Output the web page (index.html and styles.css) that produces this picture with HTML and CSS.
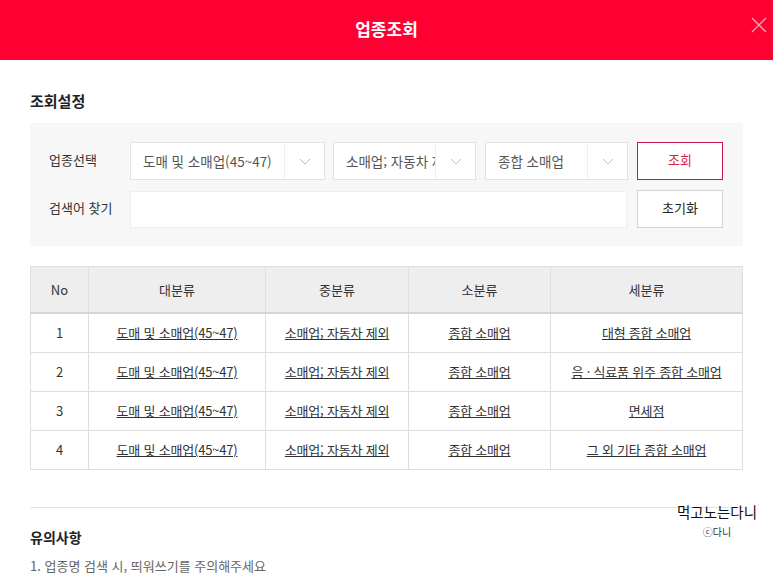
FILE: index.html
```html
<!DOCTYPE html>
<html lang="ko">
<head>
    <meta charset="UTF-8">
    <meta name="viewport" content="width=device-width, initial-scale=1.0">
    <title>업종조회</title>
    <link rel="stylesheet" href="styles.css">
</head>
<body>

    <!-- Header -->
    <header class="popup-header">
        <h1>업종조회</h1>
        <button class="close-btn" aria-label="닫기">
            <svg width="16" height="16" viewBox="0 0 16 16">
                <path d="M1 1L15 15M15 1L1 15" stroke="#ff9fb3" stroke-width="1.3" fill="none"/>
            </svg>
        </button>
    </header>

    <div class="container">

        <!-- Search Settings -->
        <h2 class="section-title">조회설정</h2>
        <div class="search-box">
            <div class="search-row">
                <span class="label">업종선택</span>
                <div class="select wide">
                    <span class="select-text">도매 및 소매업(45~47)</span>
                    <span class="select-arrow"><svg width="12" height="7" viewBox="0 0 12 7"><path d="M1 1L6 6L11 1" stroke="#bbb" fill="none"/></svg></span>
                </div>
                <div class="select">
                    <span class="select-text">소매업; 자동차 제외</span>
                    <span class="select-arrow"><svg width="12" height="7" viewBox="0 0 12 7"><path d="M1 1L6 6L11 1" stroke="#bbb" fill="none"/></svg></span>
                </div>
                <div class="select">
                    <span class="select-text">종합 소매업</span>
                    <span class="select-arrow"><svg width="12" height="7" viewBox="0 0 12 7"><path d="M1 1L6 6L11 1" stroke="#bbb" fill="none"/></svg></span>
                </div>
                <button class="btn btn-search">조회</button>
            </div>
            <div class="search-row">
                <span class="label">검색어 찾기</span>
                <input type="text" class="keyword">
                <button class="btn">초기화</button>
            </div>
        </div>

        <!-- Result Table -->
        <table class="result-table">
            <colgroup>
                <col style="width: 58px">
                <col style="width: 177px">
                <col style="width: 143px">
                <col style="width: 142px">
                <col>
            </colgroup>
            <thead>
                <tr>
                    <th>No</th>
                    <th>대분류</th>
                    <th>중분류</th>
                    <th>소분류</th>
                    <th>세분류</th>
                </tr>
            </thead>
            <tbody>
                <tr>
                    <td>1</td>
                    <td><a href="#">도매 및 소매업(45~47)</a></td>
                    <td><a href="#">소매업; 자동차 제외</a></td>
                    <td><a href="#">종합 소매업</a></td>
                    <td><a href="#">대형 종합 소매업</a></td>
                </tr>
                <tr>
                    <td>2</td>
                    <td><a href="#">도매 및 소매업(45~47)</a></td>
                    <td><a href="#">소매업; 자동차 제외</a></td>
                    <td><a href="#">종합 소매업</a></td>
                    <td><a href="#">음 · 식료품 위주 종합 소매업</a></td>
                </tr>
                <tr>
                    <td>3</td>
                    <td><a href="#">도매 및 소매업(45~47)</a></td>
                    <td><a href="#">소매업; 자동차 제외</a></td>
                    <td><a href="#">종합 소매업</a></td>
                    <td><a href="#">면세점</a></td>
                </tr>
                <tr>
                    <td>4</td>
                    <td><a href="#">도매 및 소매업(45~47)</a></td>
                    <td><a href="#">소매업; 자동차 제외</a></td>
                    <td><a href="#">종합 소매업</a></td>
                    <td><a href="#">그 외 기타 종합 소매업</a></td>
                </tr>
            </tbody>
        </table>

        <!-- Notice -->
        <div class="notice">
            <h3>유의사항</h3>
            <p>1. 업종명 검색 시, 띄워쓰기를 주의해주세요</p>
        </div>
    </div>

    <!-- Watermark -->
    <div class="watermark">
        <span class="wm-name">먹고노는다니</span>
        <span class="wm-copy">ⓒ다니</span>
    </div>

</body>
</html>
```

FILE: styles.css
```css
/* Global */
body {
    margin: 0;
    font-family: "Noto Sans CJK KR", "Noto Sans", sans-serif;
    color: #333;
    background-color: #fff;
    position: relative;
}

/* Header */
.popup-header {
    height: 60px;
    background-color: #ff0033;
    display: flex;
    align-items: center;
    justify-content: center;
    position: relative;
}

.popup-header h1 {
    margin: 0;
    color: #fff;
    font-size: 17px;
    font-weight: bold;
    margin-top: -4px;
}

.close-btn {
    position: absolute;
    right: 6px;
    top: 17px;
    background: none;
    border: none;
    padding: 0;
    cursor: pointer;
    line-height: 0;
}

/* Content */
.container {
    padding: 0 30px;
}

.section-title {
    margin: 31px 0 12px;
    font-size: 15px;
    font-weight: bold;
    color: #222;
    line-height: 20px;
}

/* Search Box */
.search-box {
    background-color: #f7f7f7;
    padding: 19px 20px 18px 19px;
    display: flex;
    flex-direction: column;
    gap: 10px;
}

.search-row {
    display: flex;
    align-items: center;
}

.label {
    width: 81px;
    font-size: 13px;
    color: #333;
    margin-top: -4px;
}

.select {
    width: 143px;
    height: 38px;
    box-sizing: border-box;
    background-color: #fff;
    border: 1px solid #e3e3e3;
    display: flex;
    margin-right: 9px;
}

.select.wide {
    width: 195px;
    margin-right: 8px;
}

.select-text {
    flex: 1;
    padding-left: 12px;
    font-size: 13.5px;
    line-height: 36px;
    color: #555;
    white-space: nowrap;
    overflow: hidden;
}

.select-arrow {
    width: 39px;
    border-left: 1px solid #eee;
    display: flex;
    align-items: center;
    justify-content: center;
}

.keyword {
    width: 497px;
    height: 37px;
    box-sizing: border-box;
    border: 1px solid #eee;
    background-color: #fff;
    margin: 0 10px 0 0;
    padding: 0 12px;
}

.btn {
    width: 86px;
    height: 38px;
    box-sizing: border-box;
    border: 1px solid #d6d6d6;
    background-color: #fff;
    font-family: inherit;
    font-size: 13px;
    color: #222;
    cursor: pointer;
    padding: 0 0 3px;
}

.btn-search {
    border-color: #c8174c;
    color: #d91f50;
}

/* Result Table */
.result-table {
    width: 100%;
    border-collapse: collapse;
    margin-top: 20px;
    table-layout: fixed;
}

.result-table th,
.result-table td {
    border: 1px solid #dedede;
    text-align: center;
    font-size: 13px;
    line-height: 18px;
    color: #333;
    padding: 1px 0;
}

.result-table th {
    height: 43px;
    background-color: #eeeeee;
    font-weight: normal;
    border-bottom: 2px solid #d6d6d6;
}

.result-table td {
    height: 36px;
}

.result-table a {
    color: #333;
    text-decoration: underline;
    letter-spacing: -0.2px;
}

/* Notice */
.notice {
    margin-top: 37px;
    border-top: 1px solid #e2e2e2;
    padding-top: 19px;
}

.notice h3 {
    margin: 0 0 10px;
    font-size: 14px;
    font-weight: bold;
    color: #222;
    line-height: 20px;
}

.notice p {
    margin: 0;
    font-size: 13px;
    color: #666;
    line-height: 18px;
}

/* Watermark */
.watermark {
    position: absolute;
    left: 675px;
    top: 502px;
    width: 84px;
    display: flex;
    flex-direction: column;
    align-items: center;
}

.wm-name {
    font-size: 14.5px;
    color: #111;
    line-height: 20px;
}

.wm-copy {
    font-size: 10px;
    color: #333;
    line-height: 12px;
    margin-top: 4px;
}
```
